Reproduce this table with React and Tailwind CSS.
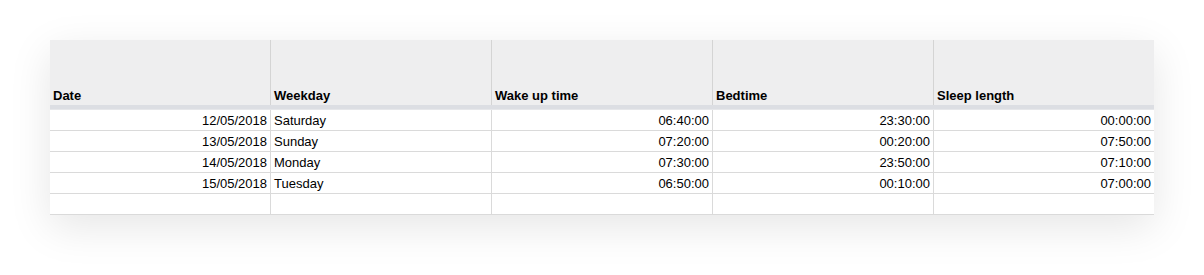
export default function App() {
  const cols = ["Date", "Weekday", "Wake up time", "Bedtime", "Sleep length"];
  const rows = [
    ["12/05/2018", "Saturday", "06:40:00", "23:30:00", "00:00:00"],
    ["13/05/2018", "Sunday", "07:20:00", "00:20:00", "07:50:00"],
    ["14/05/2018", "Monday", "07:30:00", "23:50:00", "07:10:00"],
    ["15/05/2018", "Tuesday", "06:50:00", "00:10:00", "07:00:00"],
    ["", "", "", "", ""],
  ];
  const align = ["text-right", "text-left", "text-right", "text-right", "text-right"];
  return (
    <div className="w-[1204px] h-[275px] bg-white pt-[40px] pl-[50px]" style={{ fontFamily: '"Liberation Sans", Arial, sans-serif' }}>
      <div className="w-[1104px] bg-white shadow-[0_12px_40px_rgba(0,0,0,0.10)]">
        <div className="grid grid-cols-[220px_221px_221px_221px_221px] h-[65px] bg-[#eeeeef]">
          {cols.map((c, i) => (
            <div key={i} className={`flex items-end pb-[2px] px-[3px] text-[13px] font-bold text-black leading-[15px] ${i > 0 ? "border-l border-[#d4d4d4]" : ""}`}>
              {c}
            </div>
          ))}
        </div>
        <div className="h-[5px] bg-[#dcdee3] border-b border-[#e6e7ea]" />
        {rows.map((r, ri) => (
          <div key={ri} className="grid grid-cols-[220px_221px_221px_221px_221px] h-[21px] border-b border-[#dadada]">
            {r.map((v, ci) => (
              <div key={ci} className={`px-[3px] pt-[1px] text-[13px] text-black leading-[19px] ${align[ci]} ${ci > 0 ? "border-l border-[#dadada]" : ""}`}>
                {v}
              </div>
            ))}
          </div>
        ))}
      </div>
    </div>
  );
}
